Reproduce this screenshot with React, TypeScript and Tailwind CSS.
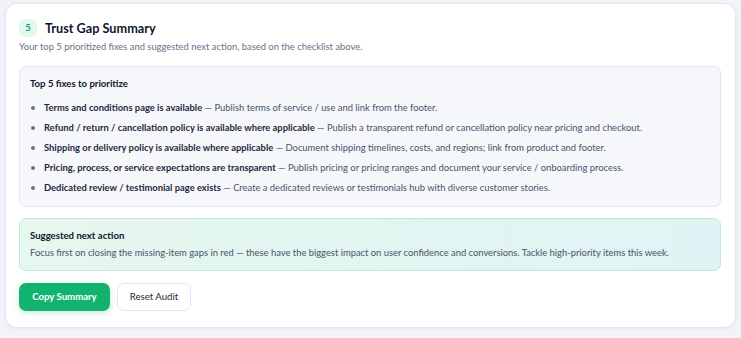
import React from "react";

const fixes = [
  ["Terms and conditions page is available", "Publish terms of service / use and link from the footer."],
  ["Refund / return / cancellation policy is available where applicable", "Publish a transparent refund or cancellation policy near pricing and checkout."],
  ["Shipping or delivery policy is available where applicable", "Document shipping timelines, costs, and regions; link from product and footer."],
  ["Pricing, process, or service expectations are transparent", "Publish pricing or pricing ranges and document your service / onboarding process."],
  ["Dedicated review / testimonial page exists", "Create a dedicated reviews or testimonials hub with diverse customer stories."],
];

export default function App() {
  return (
    <div
      className="min-h-[338px] w-[741px] bg-[#f1f3f8] pt-[3px] pl-[5px]"
      style={{ fontFamily: 'Lato, "Noto Sans", sans-serif' }}
    >
      <div className="w-[731px] rounded-[12px] border border-[#e3e7ef] bg-white pl-[13px] pr-[14px] pt-[14px] pb-[16px] shadow-[0_1px_3px_rgba(15,23,42,0.06)]">
        <div className="flex items-center gap-[8px]">
          <div className="flex h-[18px] w-[18px] items-center justify-center rounded-[5px] bg-[#e3f7ee] text-[9.5px] font-bold text-[#0f9f74]">
            5
          </div>
          <div className="text-[12.7px] font-bold leading-[20px] text-[#0f172a]">Trust Gap Summary</div>
        </div>
        <div className="mt-[2px] text-[9.4px] leading-[14px] text-[#64748b]">
          Your top 5 prioritized fixes and suggested next action, based on the checklist above.
        </div>

        <div className="mt-[12px] rounded-[7px] border border-[#e2e6ee] bg-[#f6f7fb] px-[10px] pt-[10px] pb-[11px]">
          <div className="text-[9.6px] font-bold leading-[14px] text-[#0f172a]">Top 5 fixes to prioritize</div>
          <ul className="mt-[10px] flex flex-col gap-[6px]">
            {fixes.map(([t, d]) => (
              <li key={t} className="flex items-center text-[9.4px] leading-[14px] text-[#475569]">
                <span className="ml-[1px] mr-[9px] h-[4px] w-[4px] shrink-0 rounded-full bg-[#64748b]" />
                <span className="whitespace-nowrap">
                  <span className="font-bold text-[#1e293b]">{t}</span> — {d}
                </span>
              </li>
            ))}
          </ul>
        </div>

        <div className="mt-[11px] rounded-[7px] border border-[#c2ead5] bg-gradient-to-r from-[#e5f7ee] to-[#e1f3f4] px-[10px] pt-[10px] pb-[10px]">
          <div className="text-[9.6px] font-bold leading-[14px] text-[#0f172a]">Suggested next action</div>
          <div className="mt-[3px] whitespace-nowrap text-[9.4px] leading-[14px] text-[#475569]">
            Focus first on closing the missing-item gaps in red — these have the biggest impact on user confidence and conversions. Tackle high-priority items this week.
          </div>
        </div>

        <div className="mt-[12px] flex gap-[7px]">
          <button className="h-[28px] w-[91px] rounded-[7px] bg-[#12b26f] text-[9.6px] font-bold text-white shadow-[0_2px_6px_rgba(16,178,111,0.25)]">
            Copy Summary
          </button>
          <button className="h-[28px] w-[74px] rounded-[7px] border border-[#e2e6ee] bg-white text-[9.6px] text-[#1e293b]">
            Reset Audit
          </button>
        </div>
      </div>
    </div>
  );
}
